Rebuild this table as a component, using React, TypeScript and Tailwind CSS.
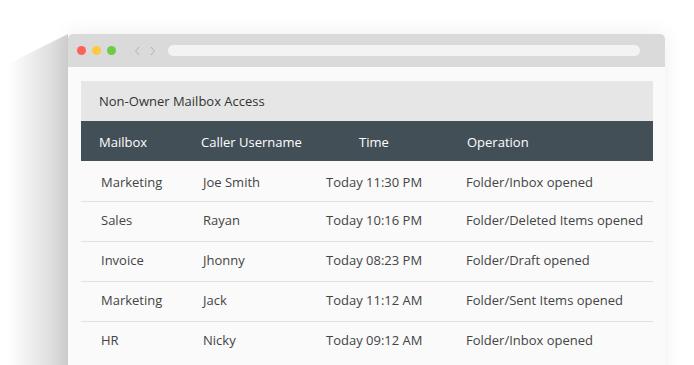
const rows = [
  { mailbox: 'Marketing', user: 'Joe Smith', time: 'Today 11:30 PM', op: 'Folder/Inbox opened' },
  { mailbox: 'Sales', user: 'Rayan', time: 'Today 10:16 PM', op: 'Folder/Deleted Items opened' },
  { mailbox: 'Invoice', user: 'Jhonny', time: 'Today 08:23 PM', op: 'Folder/Draft opened' },
  { mailbox: 'Marketing', user: 'Jack', time: 'Today 11:12 AM', op: 'Folder/Sent Items opened' },
  { mailbox: 'HR', user: 'Nicky', time: 'Today 09:12 AM', op: 'Folder/Inbox opened' },
]

function TitleBar() {
  return (
    <div className="flex h-[33px] items-center bg-[#dadada] pl-[9px] rounded-t-[5px]">
      <div className="flex gap-[6px]">
        <span className="h-[9px] w-[9px] rounded-full bg-[#fe615a]" />
        <span className="h-[9px] w-[9px] rounded-full bg-[#fec842]" />
        <span className="h-[9px] w-[9px] rounded-full bg-[#6fcb45]" />
      </div>
      <div className="ml-[18px] flex gap-[10px]">
        <svg width="6" height="10" viewBox="0 0 6 10" fill="none" stroke="#b3b3b3" strokeWidth="1">
          <path d="M5 1 L1.5 5 L5 9" />
        </svg>
        <svg width="6" height="10" viewBox="0 0 6 10" fill="none" stroke="#b3b3b3" strokeWidth="1">
          <path d="M1 1 L4.5 5 L1 9" />
        </svg>
      </div>
      <div className="ml-[12px] h-[11px] w-[472px] rounded-full bg-[#f3f3f2]" />
    </div>
  )
}

function AccessTable() {
  return (
    <div className="w-[572px] text-[13px]">
      <div className="flex h-[40px] items-center bg-[#e6e6e6] pl-[18px] pt-[2px] text-[#333]">
        Non-Owner Mailbox Access
      </div>
      <div className="flex h-[40px] items-center bg-[#434f57] pt-[3px] text-white">
        <div className="w-[120px] pl-[18px]">Mailbox</div>
        <div className="w-[158px]">Caller Username</div>
        <div className="w-[108px]">Time</div>
        <div>Operation</div>
      </div>
      {rows.map((r, i) => (
        <div
          key={i}
          className={
            'flex h-[40px] items-center text-[#444] ' +
            (i === 0 ? 'pt-[3px]' : 'border-t border-[#e2e2e2] pb-[2px]')
          }
        >
          <div className="w-[122px] pl-[20px]">{r.mailbox}</div>
          <div className="w-[123px]">{r.user}</div>
          <div className="w-[140px]">{r.time}</div>
          <div>{r.op}</div>
        </div>
      ))}
    </div>
  )
}

export default function App() {
  return (
    <div
      className="relative h-[365px] w-[694px] overflow-hidden bg-white pl-[68px] pt-[34px]"
      style={{ fontFamily: '"Open Sans", "Noto Sans", sans-serif' }}
    >
      {/* slanted drop shadow on the left */}
      <div
        className="absolute left-[8px] top-[34px] h-[340px] w-[60px] bg-[linear-gradient(to_right,rgba(255,255,255,0),#d2d2d2)]"
        style={{ clipPath: 'polygon(100% 0, 0 30px, 0 100%, 100% 100%)' }}
      />
      <div className="relative h-[360px] w-[597px] rounded-t-[5px] bg-[#fafafa] shadow-[0_0_22px_rgba(0,0,0,0.07)]">
        <TitleBar />
        <div className="pl-[13px] pt-[14px]">
          <AccessTable />
        </div>
      </div>
    </div>
  )
}
